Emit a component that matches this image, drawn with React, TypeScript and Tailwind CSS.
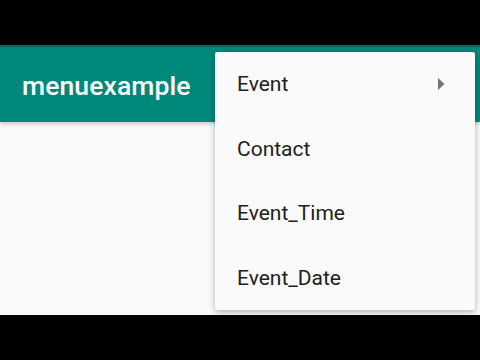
import React from "react";

export default function App() {
  const items = ["Event", "Contact", "Event_Time", "Event_Date"];
  return (
    <div className="w-[480px] h-[360px] bg-black flex flex-col overflow-hidden" style={{ fontFamily: "Roboto, 'Noto Sans', sans-serif" }}>
      <div className="h-[45px] bg-black shrink-0" />
      <div className="relative flex-1 flex flex-col bg-[#fafafa]">
        <div className="h-[2px] bg-[#00695c] shrink-0" />
        <div className="h-[75px] bg-[#00897b] shrink-0 flex items-center pl-[22px] shadow-[0_2px_4px_rgba(0,0,0,0.2)]">
          <span className="text-white text-[26.5px] font-medium tracking-[0.1px] mt-[2px]">menuexample</span>
        </div>
        <div className="absolute left-[215px] top-[7px] w-[260px] h-[258px] bg-[#fafafa] rounded-[2px] shadow-[0_2px_6px_rgba(0,0,0,0.3)] flex flex-col">
          {items.map((t, i) => (
            <div key={t} className="h-[64.5px] flex items-center justify-between pl-[22px] pr-[30px]">
              <span className="text-[#212121] text-[21px] mt-[1px]">{t}</span>
              {i === 0 && (
                <svg width="7" height="12" viewBox="0 0 7 12">
                  <path d="M0 0 L6.5 6 L0 12 Z" fill="#757575" />
                </svg>
              )}
            </div>
          ))}
        </div>
      </div>
      <div className="h-[45px] bg-black shrink-0" />
    </div>
  );
}
